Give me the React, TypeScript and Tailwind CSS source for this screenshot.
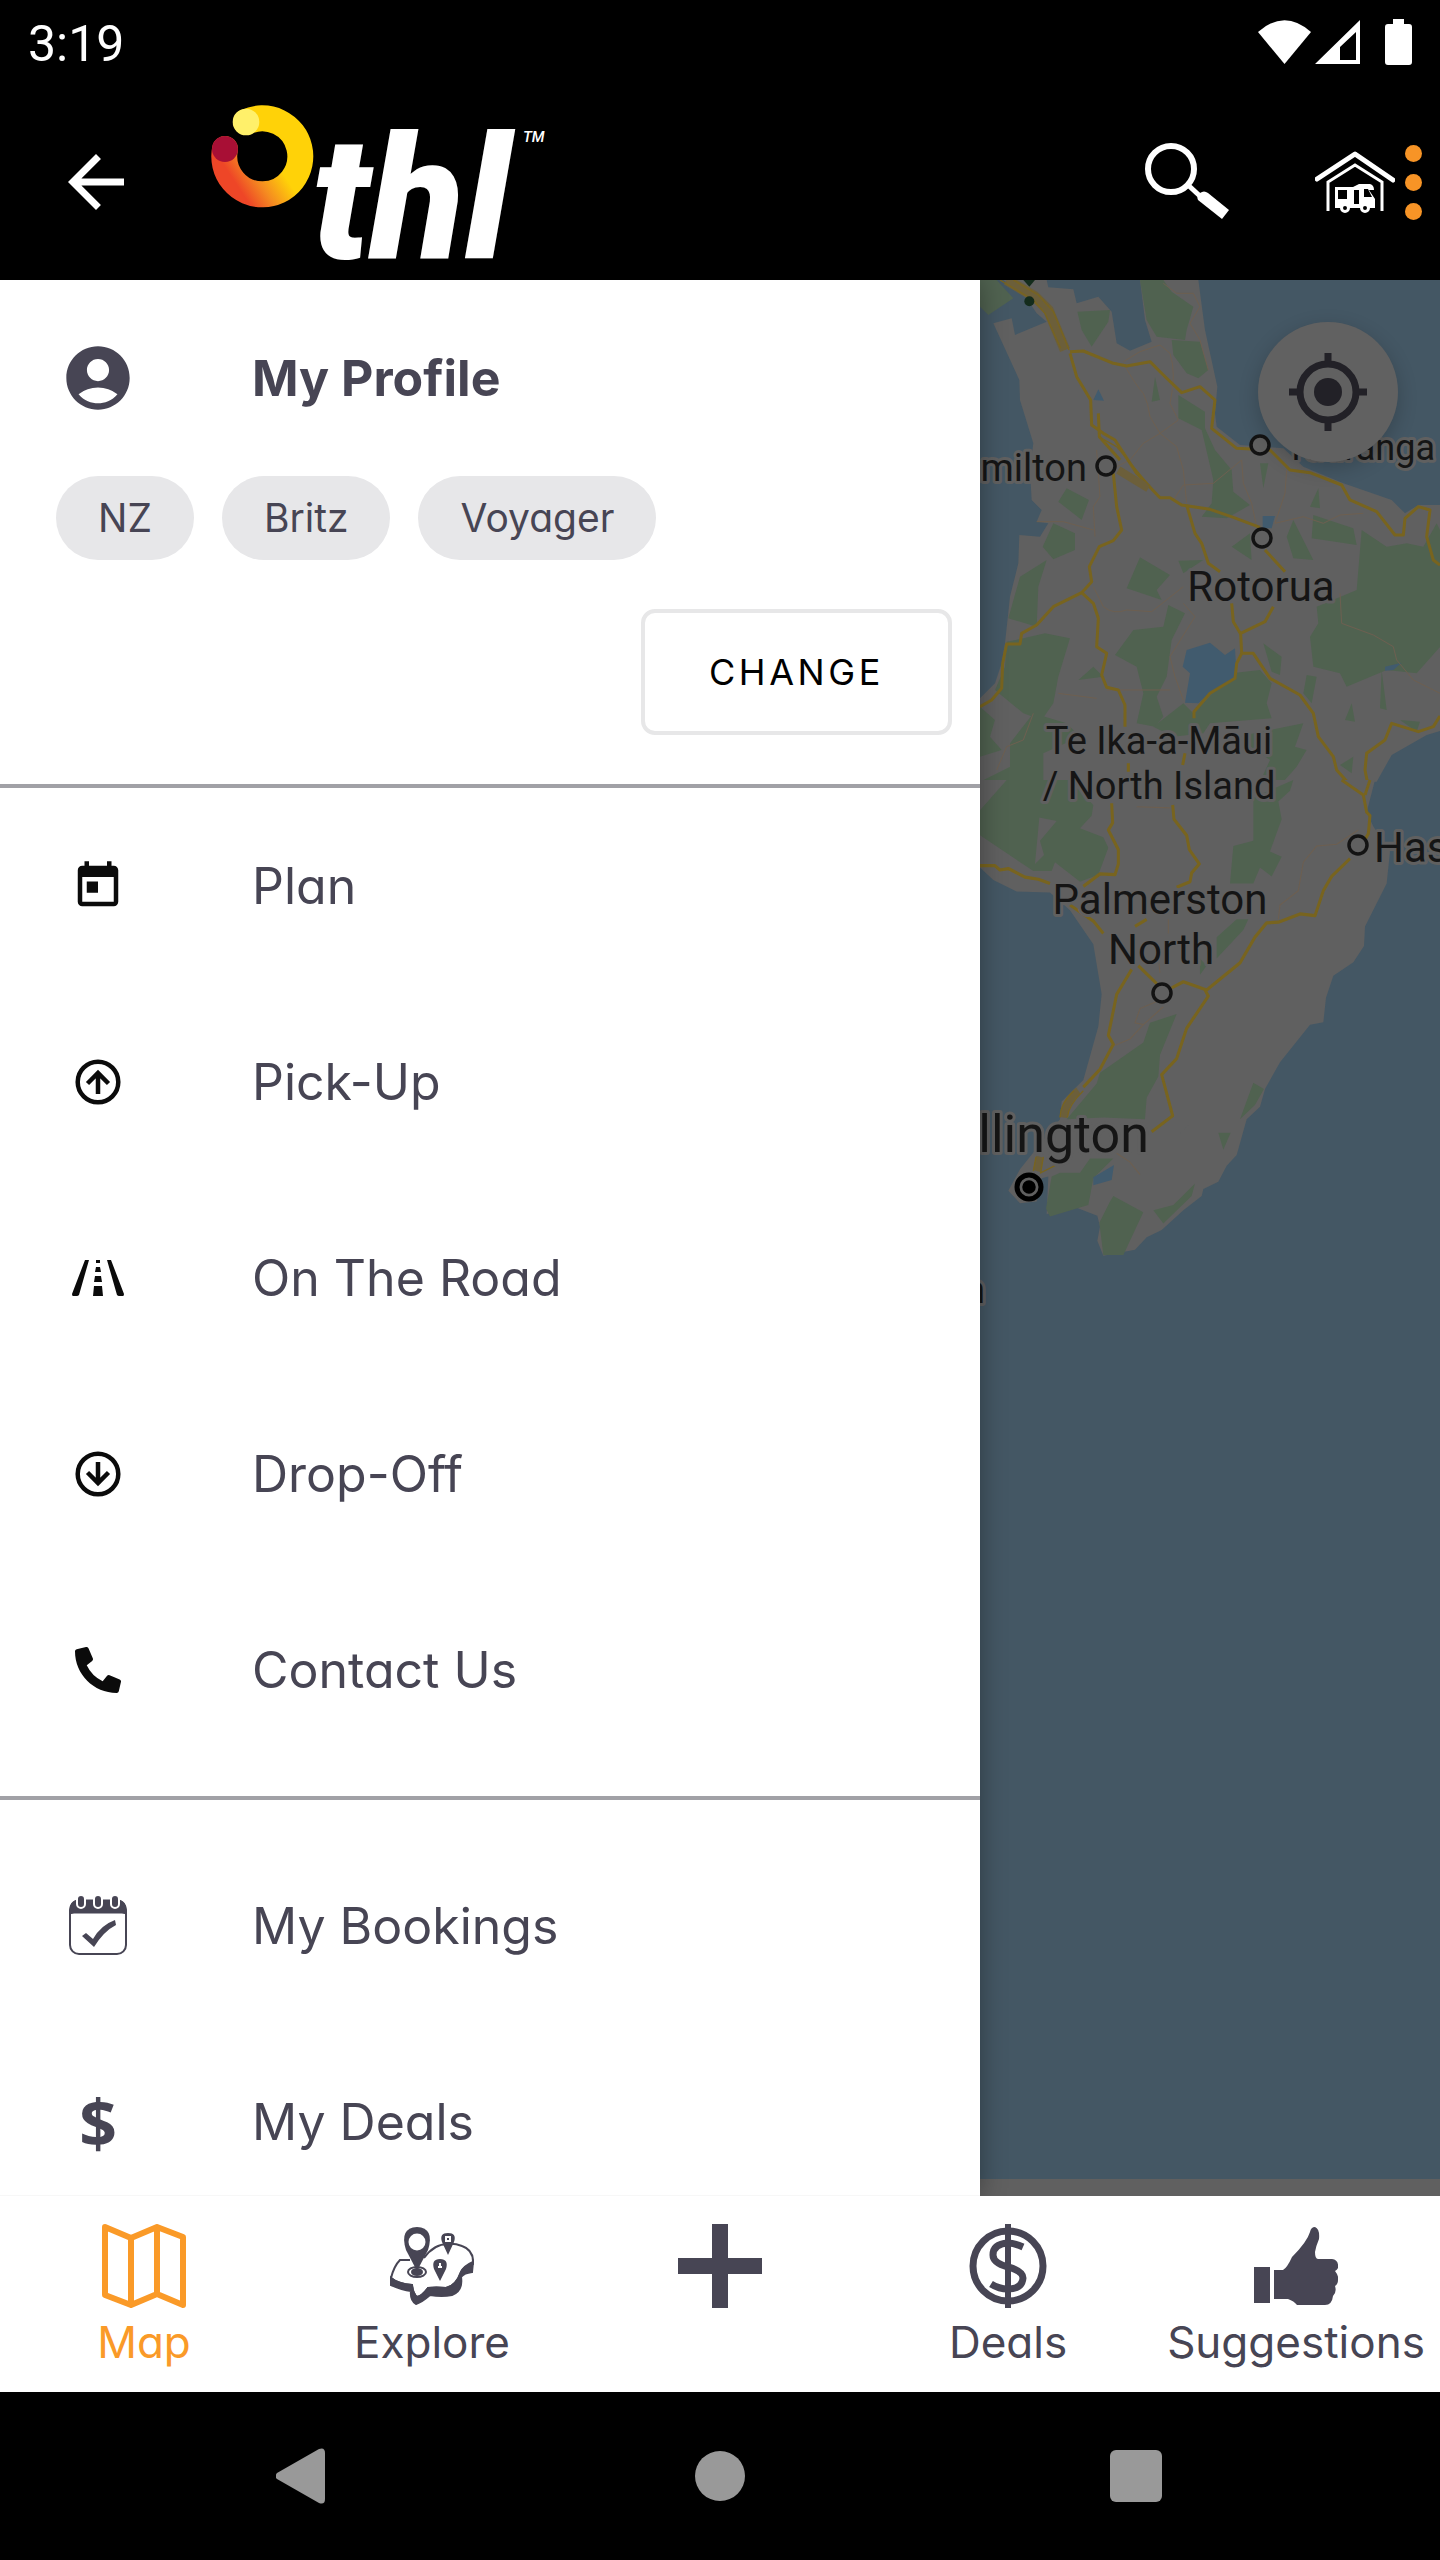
import type { ReactNode } from 'react';
import { MdAccountCircle, MdArrowBack, MdToday } from 'react-icons/md';
import { FaPhoneAlt } from 'react-icons/fa';

interface MenuItem {
  label: string;
  icon: ReactNode;
}

interface Tab {
  label: string;
  icon: ReactNode;
  active?: boolean;
}

const chips = ['NZ', 'Britz', 'Voyager'];

const tripMenu: MenuItem[] = [
  { label: 'Plan', icon: <MdToday className="size-[54px] text-[#0b0b0b]" /> },
  { label: 'Pick-Up', icon: <CircleArrow direction="up" /> },
  { label: 'On The Road', icon: <RoadIcon /> },
  { label: 'Drop-Off', icon: <CircleArrow direction="down" /> },
  { label: 'Contact Us', icon: <FaPhoneAlt className="size-[46px] text-[#0b0b0b]" /> },
];

const accountMenu: MenuItem[] = [
  { label: 'My Bookings', icon: <BookingsIcon /> },
  {
    label: 'My Deals',
    icon: <span className="font-['Open_Sans',sans-serif] text-[66px] leading-none font-bold">$</span>,
  },
];

const tabs: Tab[] = [
  { label: 'Map', icon: <MapIcon />, active: true },
  { label: 'Explore', icon: <ExploreIcon /> },
  { label: '', icon: <PlusIcon /> },
  { label: 'Deals', icon: <DealsIcon /> },
  { label: 'Suggestions', icon: <ThumbIcon /> },
];

export default function App() {
  return (
    <div className="flex h-screen flex-col overflow-hidden bg-black font-['Inter',sans-serif] text-[#474554] [font-feature-settings:'cv11']">
      <StatusBar />
      <TopBar />
      <main className="flex min-h-0 flex-1 overflow-hidden bg-[#606060]">
        <Drawer />
        <MapPane />
      </main>
      <TabBar />
      <SystemNav />
    </div>
  );
}

function StatusBar() {
  return (
    <div className="flex h-[84px] shrink-0 items-center justify-between px-7 text-white">
      <span className="pt-1 font-['Roboto',sans-serif] text-[50px] leading-[60px]">3:19</span>
      <div className="flex items-center">
        <svg viewBox="0 0 53 44" className="h-11 w-[53px]" fill="currentColor">
          <path d="M0 12 Q26.500 -11.500 53 12 L26.500 44Z" />
        </svg>
        <svg viewBox="0 0 45 44" className="ml-1 h-11 w-[45px]" fill="currentColor">
          <path fillRule="evenodd" d="M0 44 45 0V44ZM25 27V40H41V12Z" />
        </svg>
        <svg viewBox="0 0 27 46" className="ml-[25px] h-[46px] w-[27px]" fill="currentColor">
          <path d="M8 0H19V5H24Q27 5 27 8V43Q27 46 24 46H3Q0 46 0 43V8Q0 5 3 5H8Z" />
        </svg>
      </div>
    </div>
  );
}

function TopBar() {
  return (
    <header className="flex h-[196px] shrink-0 items-center pr-[18px] pl-[54px] text-white">
      <button type="button" aria-label="Back">
        <MdArrowBack className="size-[84px]" />
      </button>
      <Logo />
      <button type="button" aria-label="Search" className="ml-auto">
        <svg viewBox="0 0 88 82" className="h-[82px] w-[88px]" fill="none" stroke="currentColor">
          <circle cx="28" cy="28" r="23" strokeWidth="6" />
          <path d="M45 44 58 56" strokeWidth="5" />
          <path d="M55 59Q53 55 57 52Q61 49 65 52L86 69 79 78Z" fill="currentColor" stroke="none" />
        </svg>
      </button>
      <button type="button" aria-label="My vehicle" className="ml-21">
        <svg viewBox="0 0 80 66" className="h-[66px] w-20" fill="none" stroke="currentColor">
          <path d="M2 30 40 5 78 31" strokeWidth="5" strokeLinecap="round" strokeLinejoin="round" />
          <path d="M13 62V33L40 16 67 33V62" strokeWidth="3" />
          <path d="M20 38H38L44 35H55Q59 36 59 41H54L60 50V59H20Z" fill="currentColor" stroke="none" />
          <path d="M23 41H32V50H23ZM39 41H44V55H39ZM49 40H53L57 48H49Z" fill="#000" stroke="none" />
          <circle cx="30" cy="59" r="3.500" strokeWidth="3" fill="#000" />
          <circle cx="50" cy="59" r="3.500" strokeWidth="3" fill="#000" />
        </svg>
      </button>
      <button type="button" aria-label="More options" className="ml-2.5 flex flex-col gap-3 text-[#f79426]">
        <span className="size-[17px] rounded-full bg-current" />
        <span className="size-[17px] rounded-full bg-current" />
        <span className="size-[17px] rounded-full bg-current" />
      </button>
    </header>
  );
}

function Logo() {
  return (
    <svg viewBox="0 0 360 196" className="ml-[62px] h-[196px] w-[360px]" role="img" aria-label="thl">
      <defs>
        <linearGradient id="ring" gradientUnits="userSpaceOnUse" x1="25" y1="83" x2="83" y2="45">
          <stop offset="0" stopColor="#ee4627" />
          <stop offset="0.300" stopColor="#f58c20" />
          <stop offset="0.650" stopColor="#ffd208" />
        </linearGradient>
      </defs>
      <path d="M46 38A38 38 0 1 1 25 65" fill="none" stroke="url(#ring)" strokeWidth="26" strokeLinecap="round" />
      <circle cx="46" cy="38" r="13.300" fill="#fff06a" />
      <circle cx="25" cy="65" r="13" fill="#a80f35" />
      <text x="112" y="174" fill="#fff" className="font-['Roboto',sans-serif] text-[173px] font-black italic">
        thl
      </text>
      <text x="323" y="58" fill="#fff" className="font-['Roboto',sans-serif] text-[15px] font-medium italic">
        TM
      </text>
    </svg>
  );
}

function Drawer() {
  return (
    <aside className="relative z-10 w-[980px] shrink-0 overflow-hidden border-b border-[#f7f7f7] bg-white shadow-[0_0_24px_rgba(0,0,0,0.35)]">
      <button type="button" className="flex h-[196px] w-full items-center gap-28 px-14 text-left">
        <span className="flex w-[84px] justify-center">
          <MdAccountCircle className="size-[76px]" />
        </span>
        <span className="text-[50px] font-bold">My Profile</span>
      </button>
      <div className="flex gap-7 px-14">
        {chips.map((chip) => (
          <span key={chip} className="flex h-[84px] items-center rounded-full bg-[#e7e7e9] px-[42px] text-[39px]">
            {chip}
          </span>
        ))}
      </div>
      <div className="flex justify-end px-7 py-[49px]">
        <button
          type="button"
          className="h-[126px] rounded-[14px] border-4 border-[#e7e7e8] px-16 text-4xl tracking-widest text-black"
        >
          CHANGE
        </button>
      </div>
      <MenuList items={tripMenu} className="border-t-4 border-[#a1a1a6] pb-7" />
      <MenuList items={accountMenu} className="border-t-4 border-[#a1a1a6] pt-7" />
    </aside>
  );
}

function MenuList({ items, className }: { items: MenuItem[]; className: string }) {
  return (
    <ul className={className}>
      {items.map((item) => (
        <li key={item.label}>
          <button type="button" className="flex h-[196px] w-full items-center gap-28 px-14 text-left">
            <span className="flex w-[84px] justify-center">{item.icon}</span>
            <span className="text-[50px]">{item.label}</span>
          </button>
        </li>
      ))}
    </ul>
  );
}

function MapPane() {
  return (
    <section aria-label="Map" className="relative min-w-0 flex-1 overflow-hidden">
      <svg
        viewBox="980 280 460 1899"
        preserveAspectRatio="xMinYMin slice"
        className="h-[1899px] w-full bg-[#445764]"
        fill="none"
      >
        {/* Upper half of the island */}
        <g transform="translate(970 270) scale(0.33333)">
          <path
            fill="#606060"
            d="M100 30 170 85 200 130 230 155 135 195 125 145 70 160 148 330 150 390 190 520 180 600 185 690 215 720 200 755 235 760 210 800 148 795 145 880 120 980 105 1120 95 1180 75 1240 30 1285V1535H1220L1265 1455 1370 1395 1420 1380V705H1345L1305 730 1265 690 1120 640 1000 590 940 535 810 525 740 470 735 430 742 350 705 180 685 30H510L525 150 545 215 480 242 440 220 425 125 385 80 320 100 310 58 235 52 230 30Z"
          />
          <g fill="#506250">
            <path d="M30 30H80L130 85 55 135 30 110ZM322 125 420 120 415 155 365 230 335 180ZM510 30H580L605 65 670 110 650 180 645 210 560 200 530 150ZM605 210 690 215 715 300 685 325 650 310 610 255ZM625 375 705 425 705 475 735 540 785 600 790 665 840 705 770 745 695 740 725 700 730 630 695 480 625 445ZM555 320 570 390 545 395Z" />
            <path d="M290 655 357 690 335 750 265 695ZM250 760 315 790 315 840 250 868 218 830ZM230 870 205 950 200 1070 115 1045 150 920ZM510 862 600 915 560 960 575 990 470 955ZM625 872 700 870 640 910ZM595 1005 645 1030 605 1110 590 1220 560 1280 580 1340 555 1370 500 1360 520 1270 500 1190 435 1155 490 1080 580 1070ZM325 1230 370 1190 400 1220Z" />
            <path d="M110 1115 160 1105 225 1090 300 1105 265 1220 250 1300 215 1350 160 1330 75 1260 105 1190ZM30 1310 75 1350 60 1400 95 1440 30 1460ZM120 1420 190 1330 290 1360 330 1400 220 1450 220 1535H30L120 1490ZM785 1210 870 1200 905 1240 890 1300 905 1345 720 1360 700 1390 610 1400 550 1370 640 1300 670 1330ZM800 1400 1000 1360 975 1430 1010 1440 980 1490 940 1535H870L900 1470Z" />
            <path d="M1175 780 1250 830 1310 820 1360 830 1400 760 1420 800V1120L1340 1210 1250 1200 1130 1250 1110 1210 1030 1190 1020 1100 1045 1060 1040 1010 1160 960ZM970 750 1030 870 970 865 950 800ZM1030 735 1150 775 1160 825 1025 805ZM1045 655 1050 715 1020 710ZM870 580 895 580 880 655ZM785 830 840 790 845 870ZM880 1120 935 1160 930 1215 905 1205ZM1235 1200 1250 1320 1230 1315ZM1145 1300 1155 1355 1125 1350ZM1150 1460 1145 1510 1110 1485ZM1010 1215 1040 1220 1025 1300 1000 1270ZM1290 1350 1350 1355 1340 1385Z" />
          </g>
          <path
            fill="#415b6e"
            d="M650 1140 720 1118 765 1155 795 1135 800 1220 720 1270 685 1300 645 1298 660 1210 638 1190ZM878 738H915L905 775H878ZM385 358 402 392 370 390ZM1245 1190 1295 1178 1270 1200 1245 1202Z"
          />
          <g stroke="#6d5f50" strokeWidth="3">
            <path d="M460 280Q500 350 520 370 535 400 540 440L570 490 620 530 640 600 650 700M600 250Q620 310 600 400L625 450 570 490 520 520 480 570 440 590M460 275 510 245 570 225 600 250M580 40 620 70 670 70 690 110 660 160 690 210 715 300M815 570 820 640 845 700 860 770M815 570 730 640 640 645 610 690M950 600 945 670 915 760 1000 740 1060 760 1110 735 1180 730M380 540 390 680 370 710 375 800M200 755 280 755 370 780M370 950Q390 990 400 1010 430 1035 470 1020L545 1025 640 950M640 1000 675 1040 600 1160 615 1220 640 1290M265 1270 380 1285M410 1260H600M1110 970 1115 1060 1210 1095 1270 1130 1280 1170 1330 1230 1410 1270M190 1330 160 1410 110 1430 80 1500" />
          </g>
          <g stroke="#78641f" strokeWidth="9" strokeLinejoin="round">
            <path d="M300 245 340 243 430 280 470 288 540 275 580 315 635 368 690 350 735 390 725 475 800 535 900 540 960 600 1020 608 1115 645 1140 690 1220 725 1275 795H1300L1305 745 1345 710 1380 720 1370 800 1390 870 1410 885" />
            <path d="M300 250 320 320 362 390 365 465 400 490 435 510 500 610 570 683 600 683 635 705 720 718 790 742 870 772M385 430 388 500 450 570M430 610 440 710 455 780 430 812 388 830 358 890 365 935 335 968 250 1010 200 1065 155 1090 150 1122 110 1122 98 1180 95 1255 65 1290 30 1310" />
            <path d="M335 968 370 1000 385 1045 380 1130 410 1150 395 1215 410 1252 445 1260 465 1305V1370M650 705 675 790 695 820 715 880 750 905M885 840 945 905M785 1000 790 1055 812 1092 815 1150 850 1150 900 1225 990 1275 1030 1330 1045 1400 1090 1460 1100 1500 1145 1550M910 1010 885 1055 812 1090M815 1150 800 1180 795 1225 720 1270 672 1325V1345M1410 1338 1390 1370 1345 1385 1265 1360 1245 1410 1190 1450 1185 1500 1195 1550M475 1480V1505M645 1450 638 1485" />
          </g>
          <g stroke="#6c5f3a" strokeWidth="24" strokeLinejoin="round">
            <path d="M110 30 195 80 235 120 285 240" strokeWidth="32" />
            <path d="M445 600 535 655" />
          </g>
          <path stroke="#78641f" strokeWidth="4" d="M130 30 205 75 250 125 297 240M90 30 190 90 225 130 272 235M385 500 440 530 545 655" />
          <path fill="#142c1c" d="M160 30H195L178 50Z" />
          <circle cx="178" cy="94" r="15" fill="#142c1c" />
        </g>

        {/* Lower half, down to Wellington */}
        <g transform="translate(970 780) scale(0.33333 0.35714)">
          <path
            fill="#606060"
            d="M1215 0 1190 90 1210 130 1260 200 1250 290 1185 410 1182 465 1150 510 1090 548 1068 610 1060 678 1020 685 930 790 885 865 870 915 830 950 800 1050 770 1080 745 1125 700 1145 695 1165 640 1205 575 1260 530 1280 495 1315 400 1332 382 1290 390 1250 382 1220 320 1198 230 1215 235 1110 215 1115 200 1180 150 1185 115 1150 150 1090 270 950 275 900 340 840 385 690 395 600 370 460 300 365 240 315 140 312 70 280 30 245V0Z"
          />
          <g fill="#506250">
            <path d="M110 0H300L370 70 365 100 330 135 400 160 415 190 385 265 330 285 255 230 245 255H190L30 155V85ZM850 50 920 20 970 0 960 30 925 60 935 110 900 200 935 215 905 270 870 245 850 290H780L790 185 850 170ZM800 390H835L820 420 740 500V440ZM690 500 710 520 690 545Z" />
            <path d="M620 655 570 770 565 830 530 890 525 950 400 945 290 950 380 850 390 820 520 735 540 680ZM330 1100 360 1060H430L370 1115 355 1190 240 1222 228 1200 245 1110 270 1100ZM430 1165 520 1210 460 1330H400L388 1240 420 1180ZM550 1205 610 1190 675 1130 665 1165 580 1242ZM850 848 882 865 855 910 810 950ZM745 988H782L760 1035Z" />
          </g>
          <path fill="#606060" d="M208 105 260 115 210 170 222 210 195 235Z" />
          <path fill="#415b6e" d="M432 1078 425 1120 370 1135V1112ZM655 965 620 1000 650 970Z" />
          <path stroke="#6d5f50" strokeWidth="3" d="M1165 140 1100 180 1040 185 1000 230 985 310 930 350 925 390M500 75 600 78M595 390V430M565 500 570 540M560 620 510 640 495 680 520 685 580 635M520 685 480 725 430 745M440 1045 480 1070 510 1105" />
          <g stroke="#78641f" strokeWidth="9" strokeLinejoin="round">
            <path d="M30 240H75L90 252 115 248 165 272 205 278 240 290M425 65 428 120 415 140 445 195V235L435 265 390 263 340 298M608 70 612 110 650 155 658 195 688 235 665 260 660 285 620 300M1115 0 1180 42 1190 90 1200 100 1195 150 1165 200M1200 0 1185 42" />
            <path d="M1140 220 1085 270 1060 310 1035 380 990 375 925 398 890 400 855 440 810 512 710 588 640 565 605 582M705 588 715 605 650 695 620 780 575 825 608 940 545 985M560 570 505 520M300 350 370 395 400 430M495 410 530 390M485 530 440 600 415 715 430 740 390 810 340 860" />
          </g>
          <path stroke="#6c5f3a" strokeWidth="22" d="M325 870Q285 900 280 945M210 1055 200 1095" />
          <path stroke="#78641f" strokeWidth="4" d="M340 870Q295 910 292 945M312 870Q270 905 270 945M198 1055 190 1095M220 1055 212 1100 255 1080" />
        </g>

        {/* Town markers */}
        <g stroke="#131313" strokeWidth="3.500" fill="#606060">
          <circle cx="1106" cy="466" r="9" />
          <circle cx="1260" cy="445" r="9" />
          <circle cx="1262" cy="538" r="9" />
          <circle cx="1358" cy="845" r="9" />
          <circle cx="1162" cy="993" r="9" />
          <circle cx="1029" cy="1187" r="12" strokeWidth="5" stroke="#000" />
          <circle cx="1029" cy="1187" r="5" fill="#000" stroke="#000" />
        </g>
        <g
          fill="#151515"
          stroke="#606060"
          strokeWidth="6"
          strokeLinejoin="round"
          paintOrder="stroke"
          className="font-['Roboto',sans-serif] text-[38px]"
        >
          <text x="1087" y="481" textAnchor="end">Hamilton</text>
          <text x="1435" y="460" textAnchor="end" className="text-4xl">Tauranga</text>
          <text x="1261" y="601" textAnchor="middle" className="text-[42px]">Rotorua</text>
          <text x="1159" y="754" textAnchor="middle">Te Ika-a-Māui</text>
          <text x="1159" y="799" textAnchor="middle">/ North Island</text>
          <text x="1160" y="914" textAnchor="middle" className="text-[42px]">Palmerston</text>
          <text x="1161" y="964" textAnchor="middle" className="text-[42px]">North</text>
          <text x="1374" y="862" className="text-[42px]">Hastings</text>
          <text x="1149" y="1152" textAnchor="end" className="text-[52px]">Wellington</text>
          <text x="985" y="1303" textAnchor="end">Blenheim</text>
        </g>
      </svg>

      <button
        type="button"
        aria-label="Centre on my location"
        className="absolute top-[42px] right-[42px] flex size-[140px] items-center justify-center rounded-full bg-[#616161] text-[#222127] shadow-[0_6px_20px_rgba(0,0,0,0.2)]"
      >
        <svg viewBox="0 0 78 78" className="size-[78px]" fill="none" stroke="currentColor">
          <circle cx="39" cy="39" r="28" strokeWidth="7" />
          <circle cx="39" cy="39" r="14" fill="currentColor" stroke="none" />
          <path d="M39 0V10M39 68V78M0 39H10M68 39H78" strokeWidth="7" />
        </svg>
      </button>
    </section>
  );
}

function TabBar() {
  return (
    <nav className="grid h-[196px] shrink-0 grid-cols-5 bg-white">
      {tabs.map((tab) => (
        <button
          key={tab.label || 'add'}
          type="button"
          aria-label={tab.label || 'Add'}
          className={`flex flex-col items-center pt-7 ${tab.active ? 'text-[#fa9a28]' : ''}`}
        >
          {tab.icon}
          <span className="mt-1 text-[44px] leading-[60px]">{tab.label}</span>
        </button>
      ))}
    </nav>
  );
}

function SystemNav() {
  return (
    <div className="flex h-[168px] shrink-0 items-center justify-center text-[#999999]">
      <button type="button" aria-label="System back" className="flex w-[416px] justify-center">
        <svg viewBox="0 0 56 56" className="size-14" fill="currentColor">
          <path d="M1 25 43 1Q49 -1 49 5V51Q49 57 43 55L1 31Q-2 28 1 25Z" />
        </svg>
      </button>
      <button type="button" aria-label="Home" className="flex w-[416px] justify-center">
        <span className="size-[50px] rounded-full bg-current" />
      </button>
      <button type="button" aria-label="Recent apps" className="flex w-[416px] justify-center">
        <span className="size-[52px] rounded-md bg-current" />
      </button>
    </div>
  );
}

function CircleArrow({ direction }: { direction: 'up' | 'down' }) {
  return (
    <svg
      viewBox="0 0 46 46"
      className={`size-[46px] text-[#0b0b0b] ${direction === 'down' ? 'rotate-180' : ''}`}
      fill="none"
      stroke="currentColor"
      strokeWidth="4.500"
    >
      <circle cx="23" cy="23" r="20.300" />
      <path d="M23 35V14M12.500 24.500 23 14 33.500 24.500" />
    </svg>
  );
}

function RoadIcon() {
  return (
    <svg viewBox="0 0 52 36" className="h-9 w-[52px] text-[#0b0b0b]" fill="currentColor">
      <path d="M13 0H17L7 35Q6 36 5 36H1Q0 36 0 34ZM35 0H39L52 34Q52 36 51 36H47Q46 36 45 35ZM24 0H28V3H24ZM24 7H28L29 12H23ZM23 16H29L30 22H22ZM22 26H30L31 36H21Z" />
    </svg>
  );
}

function BookingsIcon() {
  return (
    <svg viewBox="0 0 58 60" className="h-[60px] w-[58px]" fill="none" stroke="currentColor">
      <rect x="1" y="5" width="56" height="53" rx="9" strokeWidth="2" />
      <path d="M1 19V14Q1 4 10 4H48Q57 4 57 14V19Q57 17 53 17H5Q1 17 1 19Z" fill="currentColor" />
      <g stroke="#fff" strokeWidth="2" fill="currentColor">
        <rect x="8" y="-1" width="8" height="13" rx="4" />
        <rect x="25" y="-1" width="8" height="13" rx="4" />
        <rect x="42" y="-1" width="8" height="13" rx="4" />
      </g>
      <path d="M13 40 17 37 24 43Q32 29 46 24L47 29Q35 35 25 51Z" fill="currentColor" stroke="none" />
    </svg>
  );
}

function MapIcon() {
  return (
    <svg viewBox="0 0 84 84" className="size-[84px]" fill="none" stroke="currentColor" strokeWidth="6" strokeLinejoin="round">
      <path d="M3 3 29 14 55 3 81 13V81L55 70 29 81 3 71ZM29 14V81M55 3V70" />
    </svg>
  );
}

function ExploreIcon() {
  return (
    <svg viewBox="0 0 84 84" className="size-[84px]" fill="none" stroke="currentColor" strokeWidth="2">
      <path
        d="M1 54V61Q12 66 21 67 20 76 26 80 32 78 40 71 52 73 62 71 73 67 71 53 74 49 82 48L83 38Q74 42 71 48 66 62 56 64 46 63 38 64 32 72 27 73 23 70 22 61 8 60 1 54Z"
        fill="currentColor"
      />
      <path d="M20 36H10Q4 42 1 54 8 60 22 61 23 70 27 73 32 72 38 64 46 63 56 64 66 62 71 48 74 42 83 40 84 26 72 22 64 19 58 20 44 20 34 34" />
      <ellipse cx="27" cy="48" rx="9" ry="5" />
      <ellipse cx="27" cy="48" rx="5" ry="3" fill="currentColor" />
      <path d="M27 47 16 26Q9 4 27 3 45 4 38 26Z" fill="currentColor" stroke="none" />
      <circle cx="27" cy="18" r="8.500" fill="#fff" stroke="none" />
      <path d="M58 31 52 18Q49 9 58 9 67 9 64 18ZM50 57 44 45Q41 35 50 35 59 35 56 45Z" fill="currentColor" stroke="none" />
      <path d="M56 13H60V17H56ZM48 43H52M50 39V43" stroke="#fff" />
    </svg>
  );
}

function PlusIcon() {
  return (
    <svg viewBox="0 0 84 84" className="size-[84px]" fill="currentColor">
      <path d="M34 0H50V34H84V50H50V84H34V50H0V34H34Z" />
    </svg>
  );
}

function DealsIcon() {
  return (
    <svg viewBox="0 0 84 84" className="size-[84px]" fill="none" stroke="currentColor">
      <circle cx="42" cy="42" r="35" strokeWidth="7" />
      <path d="M42 0V84" strokeWidth="6" />
      <path d="M57 23Q48 19 42 19 27 20 27 31 27 39 42 43 57 47 57 54 56 65 42 65 33 65 25 60" strokeWidth="7" />
    </svg>
  );
}

function ThumbIcon() {
  return (
    <svg viewBox="0 0 84 84" className="size-[84px]" fill="currentColor">
      <path d="M0 43H16V79H0ZM20 46H29Q33 44 38 33 53 18 56 8 57 3 61 3 66 5 65 15 62 22 61 28 61 35 64 35H78Q85 36 84 44 83 46 81 47 85 52 84 56 84 60 81 62 83 68 79 72 78 81 71 81H43Q40 77 34 75H20Z" />
    </svg>
  );
}
